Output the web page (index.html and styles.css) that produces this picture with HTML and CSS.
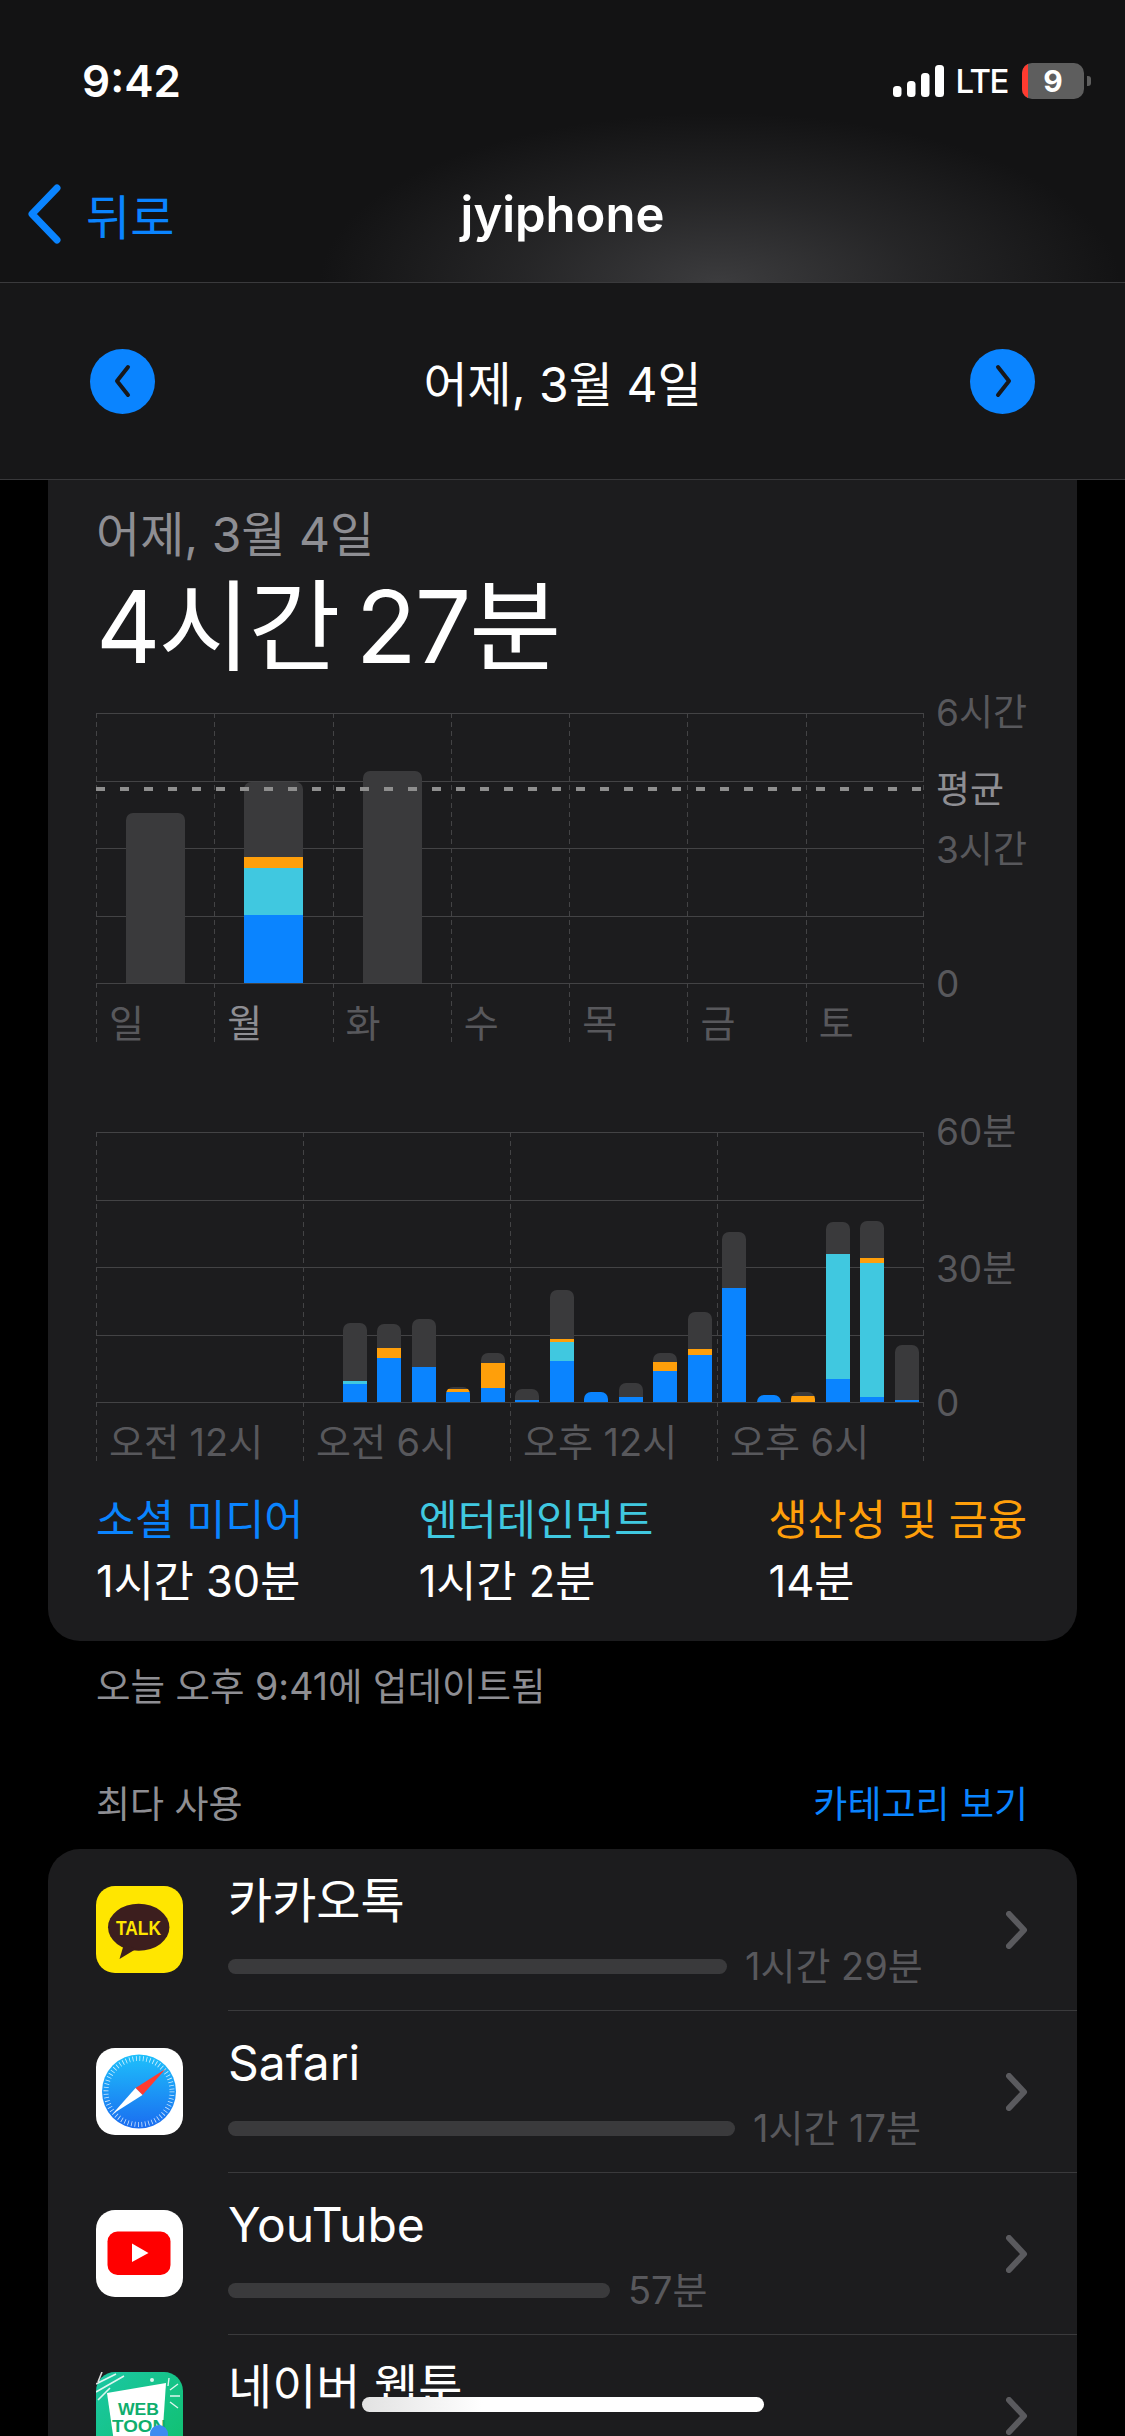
FILE: index.html
```html
<!DOCTYPE html>
<html lang="ko">
<head>
  <meta charset="UTF-8">
  <meta name="viewport" content="width=device-width, initial-scale=1.0">
  <title>jyiphone</title>
  <link rel="stylesheet" href="styles.css">
</head>
<body>
  <div class="page">
    <!-- Status bar + nav -->
    <header class="top">
      <div class="status">
        <span class="clock">9:42</span>
        <div class="status-right">
          <svg class="signal" width="52" height="32" viewBox="0 0 52 32">
            <rect x="0" y="21" width="8.5" height="11" rx="3.5" fill="#fff"/>
            <rect x="14" y="16" width="8.5" height="16" rx="3.5" fill="#fff"/>
            <rect x="28" y="8" width="8.5" height="24" rx="3.5" fill="#fff"/>
            <rect x="42" y="0" width="9" height="32" rx="3.5" fill="#fff"/>
          </svg>
          <span class="lte">LTE</span>
          <div class="battery"><span class="battery-low"></span><span class="battery-num">9</span></div>
          <span class="battery-nub"></span>
        </div>
      </div>
      <nav class="nav">
        <div class="back">
          <svg width="36" height="60" viewBox="0 0 36 60"><path d="M30 4 L5 30 L30 56" fill="none" stroke="#0a84ff" stroke-width="7" stroke-linecap="round" stroke-linejoin="round"/></svg>
          <span>뒤로</span>
        </div>
        <div class="nav-title">jyiphone</div>
        <div></div>
      </nav>
    </header>

    <div class="date-bar">
      <div class="round-btn">
        <svg width="24" height="34" viewBox="0 0 24 34"><path d="M17 3 L6 17 L17 31" fill="none" stroke="#17171a" stroke-width="4" stroke-linecap="round" stroke-linejoin="round"/></svg>
      </div>
      <div class="date-bar-label">어제, 3월 4일</div>
      <div class="round-btn">
        <svg width="24" height="34" viewBox="0 0 24 34"><path d="M7 3 L18 17 L7 31" fill="none" stroke="#17171a" stroke-width="4" stroke-linecap="round" stroke-linejoin="round"/></svg>
      </div>
    </div>

    <!-- Usage card -->
    <section class="usage-card">
      <div class="usage-date">어제, 3월 4일</div>
      <div class="usage-total">4시간 27분</div>

      <!-- Week chart -->
      <div class="chart week-chart">
        <div class="hlines"><i></i><i></i><i></i><i></i><i></i></div>
        <div class="avg-line"></div>
        <div class="week-cols">
          <div class="col">
            <div class="col-plot"><div class="bar day-bar" style="height:170px"></div></div>
            <div class="col-label">일</div>
          </div>
          <div class="col">
            <div class="col-plot">
              <div class="bar day-bar" style="height:201px">
                <div class="seg orange" style="height:11px"></div>
                <div class="seg cyan" style="height:47px"></div>
                <div class="seg blue" style="height:68px"></div>
              </div>
            </div>
            <div class="col-label current">월</div>
          </div>
          <div class="col">
            <div class="col-plot"><div class="bar day-bar" style="height:212px"></div></div>
            <div class="col-label">화</div>
          </div>
          <div class="col"><div class="col-plot"></div><div class="col-label">수</div></div>
          <div class="col"><div class="col-plot"></div><div class="col-label">목</div></div>
          <div class="col"><div class="col-plot"></div><div class="col-label">금</div></div>
          <div class="col"><div class="col-plot"></div><div class="col-label">토</div></div>
        </div>
        <div class="y-axis">
          <span>6시간</span>
          <span>3시간</span>
          <span>0</span>
          <span class="y-avg">평균</span>
        </div>
      </div>

      <!-- Hour chart -->
      <div class="chart hour-chart">
        <div class="hlines"><i></i><i></i><i></i><i></i><i></i></div>
        <div class="hour-cols">
          <div class="col"><div class="col-plot"></div><div class="col-label">오전 12시</div></div>
          <div class="col"><div class="col-plot"></div><div class="col-label">오전 6시</div></div>
          <div class="col"><div class="col-plot"></div><div class="col-label">오후 12시</div></div>
          <div class="col"><div class="col-plot"></div><div class="col-label">오후 6시</div></div>
        </div>
        <div class="hour-bars">
          <div class="bar" style="grid-column:8;height:79px"><div class="seg cyan" style="height:3px"></div><div class="seg blue" style="height:18px"></div></div>
          <div class="bar" style="grid-column:9;height:78px"><div class="seg orange" style="height:10px"></div><div class="seg blue" style="height:44px"></div></div>
          <div class="bar" style="grid-column:10;height:83px"><div class="seg blue" style="height:35px"></div></div>
          <div class="bar" style="grid-column:11;height:15px"><div class="seg orange" style="height:3px"></div><div class="seg blue" style="height:10px"></div></div>
          <div class="bar" style="grid-column:12;height:49px"><div class="seg orange" style="height:25px"></div><div class="seg blue" style="height:14px"></div></div>
          <div class="bar" style="grid-column:13;height:13px"><div class="seg blue" style="height:2px"></div></div>
          <div class="bar" style="grid-column:14;height:112px"><div class="seg orange" style="height:3px"></div><div class="seg cyan" style="height:19px"></div><div class="seg blue" style="height:41px"></div></div>
          <div class="bar blue" style="grid-column:15;height:10px"></div>
          <div class="bar" style="grid-column:16;height:19px"><div class="seg blue" style="height:5px"></div></div>
          <div class="bar" style="grid-column:17;height:49px"><div class="seg orange" style="height:9px"></div><div class="seg blue" style="height:31px"></div></div>
          <div class="bar" style="grid-column:18;height:90px"><div class="seg orange" style="height:6px"></div><div class="seg blue" style="height:47px"></div></div>
          <div class="bar" style="grid-column:19;height:170px"><div class="seg blue" style="height:114px"></div></div>
          <div class="bar blue" style="grid-column:20;height:7px"></div>
          <div class="bar" style="grid-column:21;height:10px"><div class="seg orange" style="height:6px"></div></div>
          <div class="bar" style="grid-column:22;height:180px"><div class="seg cyan" style="height:125px"></div><div class="seg blue" style="height:23px"></div></div>
          <div class="bar" style="grid-column:23;height:181px"><div class="seg orange" style="height:5px"></div><div class="seg cyan" style="height:134px"></div><div class="seg blue" style="height:5px"></div></div>
          <div class="bar" style="grid-column:24;height:57px"><div class="seg blue" style="height:2px"></div></div>
        </div>
        <div class="y-axis">
          <span>60분</span>
          <span>30분</span>
          <span>0</span>
        </div>
      </div>

      <div class="legend">
        <div>
          <div class="legend-name text-blue">소셜 미디어</div>
          <div class="legend-value">1시간 30분</div>
        </div>
        <div>
          <div class="legend-name text-cyan">엔터테인먼트</div>
          <div class="legend-value">1시간 2분</div>
        </div>
        <div>
          <div class="legend-name text-orange">생산성 및 금융</div>
          <div class="legend-value">14분</div>
        </div>
      </div>
    </section>

    <div class="updated">오늘 오후 9:41에 업데이트됨</div>

    <div class="section-head">
      <span>최다 사용</span>
      <span class="text-blue">카테고리 보기</span>
    </div>

    <!-- App list -->
    <section class="app-list">
      <div class="app-row">
        <svg class="app-icon" viewBox="0 0 87 87">
          <rect width="87" height="87" rx="19" fill="#ffe600"/>
          <ellipse cx="42.7" cy="41.3" rx="30.7" ry="23.5" fill="#3c1e1e"/>
          <path d="M28 58 L23.5 73 L40 63 Z" fill="#3c1e1e"/>
          <text x="20" y="49" class="talk-text" textLength="45" lengthAdjust="spacingAndGlyphs">TALK</text>
        </svg>
        <div class="app-body">
          <div class="app-main">
            <div class="app-name">카카오톡</div>
            <div class="app-usage"><div class="usage-bar" style="width:499px"></div><span>1시간 29분</span></div>
          </div>
          <svg class="chevron" width="22" height="38" viewBox="0 0 22 38"><path d="M3 3 L18 19 L3 35" fill="none" stroke="#5a5a5e" stroke-width="6" stroke-linecap="round" stroke-linejoin="round"/></svg>
        </div>
      </div>

      <div class="app-row">
        <svg class="app-icon" viewBox="0 0 87 87">
          <defs>
            <linearGradient id="safari-blue" x1="0" y1="0" x2="0" y2="1">
              <stop offset="0" stop-color="#1ec0fb"/>
              <stop offset="1" stop-color="#1a6cf0"/>
            </linearGradient>
          </defs>
          <rect width="87" height="87" rx="19" fill="#fff"/>
          <circle cx="43" cy="43.5" r="37" fill="url(#safari-blue)"/>
          <circle cx="43" cy="43.5" r="33" fill="none" stroke="#fff" stroke-opacity=".8" stroke-width="5" stroke-dasharray="0.8 2.66"/>
          <path d="M69.5 21 L39.5 40 L46.5 47 Z" fill="#ff3b30"/>
          <path d="M16.5 66 L39.5 40 L46.5 47 Z" fill="#fff"/>
        </svg>
        <div class="app-body">
          <div class="app-main">
            <div class="app-name">Safari</div>
            <div class="app-usage"><div class="usage-bar" style="width:507px"></div><span>1시간 17분</span></div>
          </div>
          <svg class="chevron" width="22" height="38" viewBox="0 0 22 38"><path d="M3 3 L18 19 L3 35" fill="none" stroke="#5a5a5e" stroke-width="6" stroke-linecap="round" stroke-linejoin="round"/></svg>
        </div>
      </div>

      <div class="app-row">
        <svg class="app-icon" viewBox="0 0 87 87">
          <rect width="87" height="87" rx="19" fill="#fff"/>
          <rect x="11.5" y="21.5" width="63" height="43.5" rx="10" fill="#ff0000"/>
          <path d="M36 33.5 L52.5 43 L36 52 Z" fill="#fff"/>
        </svg>
        <div class="app-body">
          <div class="app-main">
            <div class="app-name">YouTube</div>
            <div class="app-usage"><div class="usage-bar" style="width:382px"></div><span>57분</span></div>
          </div>
          <svg class="chevron" width="22" height="38" viewBox="0 0 22 38"><path d="M3 3 L18 19 L3 35" fill="none" stroke="#5a5a5e" stroke-width="6" stroke-linecap="round" stroke-linejoin="round"/></svg>
        </div>
      </div>

      <div class="app-row">
        <svg class="app-icon" viewBox="0 0 87 87">
          <defs>
            <linearGradient id="toon-green" x1="0" y1="0" x2="1" y2="1">
              <stop offset="0" stop-color="#1bc7a4"/>
              <stop offset="1" stop-color="#10c06c"/>
            </linearGradient>
          </defs>
          <rect width="87" height="87" rx="19" fill="url(#toon-green)"/>
          <path d="M0 12 L20 2 M0 20 L28 4 M2 28 L14 16 M6 0 L2 10" stroke="#fff" stroke-width="1.6" opacity=".85"/>
          <path d="M74 18 L82 12 M74 24 L84 24 M74 30 L82 36 M72 14 L73 6" stroke="#fff" stroke-width="1.4" opacity=".85"/>
          <circle cx="56" cy="8" r="2" fill="#fff" opacity=".85"/>
          <path d="M11 21 L70 11 L66 70 L18 70 Z" fill="#fff"/>
          <text x="22" y="43" class="toon-text" textLength="41" lengthAdjust="spacingAndGlyphs">WEB</text>
          <text x="16" y="60" class="toon-text" textLength="54" lengthAdjust="spacingAndGlyphs">TOON</text>
          <circle cx="63" cy="62" r="9" fill="#3d8bf0"/>
        </svg>
        <div class="app-body">
          <div class="app-main">
            <div class="app-name">네이버 웹툰</div>
          </div>
          <svg class="chevron" width="22" height="38" viewBox="0 0 22 38"><path d="M3 3 L18 19 L3 35" fill="none" stroke="#5a5a5e" stroke-width="6" stroke-linecap="round" stroke-linejoin="round"/></svg>
        </div>
      </div>
    </section>

    <div class="home-indicator"></div>
  </div>
</body>
</html>
```

FILE: styles.css
```css
:root {
  --card-bg: #1c1c1e;
  --grid: #434345;
  --bar-gray: #3a3a3c;
  --blue: #0a84ff;
  --cyan: #40c8e0;
  --orange: #ff9f0a;
  --muted: #8e8e93;
  --faint: #58585c;
}

* {
  box-sizing: border-box;
}

html, body {
  margin: 0;
  background: #000;
}

body {
  font-family: Inter, "Noto Sans CJK KR", sans-serif;
  color: #fff;
}

.page {
  position: relative;
  width: 1125px;
  height: 2436px;
  overflow: hidden;
}

/* Header */
.top {
  height: 283px;
  padding-top: 26px;
  border-bottom: 1px solid #3a3a3c;
  background:
    radial-gradient(ellipse 400px 170px at 720px 283px, #3c3c3e 0%, rgba(60, 60, 62, 0.45) 50%, rgba(60, 60, 62, 0) 100%),
    #131314;
}

.status {
  height: 110px;
  display: flex;
  align-items: center;
  justify-content: space-between;
  padding: 0 34px 0 82px;
}

.clock {
  font-size: 44px;
  font-weight: 600;
}

.status-right {
  display: flex;
  align-items: center;
}

.signal {
  margin-right: 11px;
}

.lte {
  font-size: 33px;
  font-weight: 500;
  letter-spacing: -1.5px;
  margin-right: 14px;
}

.battery {
  position: relative;
  width: 62px;
  height: 36px;
  border-radius: 10px;
  background: #5e5e5e;
  overflow: hidden;
  display: flex;
  align-items: center;
  justify-content: center;
}

.battery-low {
  position: absolute;
  left: 0;
  top: 0;
  bottom: 0;
  width: 6px;
  background: #ff3b30;
}

.battery-num {
  font-size: 30px;
  font-weight: 700;
}

.battery-nub {
  width: 4px;
  height: 10px;
  margin-left: 3px;
  border-radius: 0 3px 3px 0;
  background: #5e5e5e;
}

.nav {
  height: 110px;
  margin-top: 23px;
  display: grid;
  grid-template-columns: 1fr auto 1fr;
  align-items: center;
}

.back {
  display: flex;
  align-items: center;
  gap: 23px;
  padding-left: 27px;
  color: var(--blue);
  font-size: 48px;
}

.nav-title {
  font-size: 49px;
  font-weight: 600;
}

.date-bar {
  height: 197px;
  display: flex;
  align-items: center;
  justify-content: space-between;
  padding: 0 90px;
  border-bottom: 1px solid #38383a;
  background: #171718;
}

.round-btn {
  width: 65px;
  height: 65px;
  border-radius: 50%;
  background: var(--blue);
  display: flex;
  align-items: center;
  justify-content: center;
}

.date-bar-label {
  font-size: 48px;
}

/* Usage card */
.usage-card {
  margin: 0 48px;
  padding: 30px 50px 35px 48px;
  background: var(--card-bg);
  border-radius: 0 0 32px 32px;
}

.usage-date {
  font-size: 48px;
  line-height: 50px;
  color: var(--muted);
}

.usage-total {
  margin-top: 12px;
  font-size: 100px;
  line-height: 110px;
  letter-spacing: -2px;
  word-spacing: -9px;
}

.chart {
  position: relative;
  width: 828px;
}

.week-chart {
  margin-top: 31px;
}

.hour-chart {
  margin-top: 89px;
}

.hlines {
  position: absolute;
  left: 0;
  right: 0;
  top: 0;
  height: 271px;
  display: flex;
  flex-direction: column;
  justify-content: space-between;
}

.hlines i {
  display: block;
  height: 1px;
  background: var(--grid);
}

.avg-line {
  position: absolute;
  z-index: 2;
  left: 0;
  right: 0;
  top: 74px;
  height: 4px;
  background: repeating-linear-gradient(90deg, #8e8e8e 0, #8e8e8e 9px, transparent 9px, transparent 24px);
}

.week-cols, .hour-cols {
  position: relative;
  display: grid;
  background: repeating-linear-gradient(180deg, var(--grid) 0, var(--grid) 5px, transparent 5px, transparent 9px) right / 1px 100% no-repeat;
}

.week-cols {
  grid-template-columns: repeat(7, 1fr);
}

.hour-cols {
  grid-template-columns: repeat(4, 1fr);
}

.col {
  height: 330px;
  background: repeating-linear-gradient(180deg, var(--grid) 0, var(--grid) 5px, transparent 5px, transparent 9px) left / 1px 100% no-repeat;
}

.col-plot {
  height: 270px;
  display: flex;
  align-items: flex-end;
  padding-left: 30px;
}

.col-label {
  height: 60px;
  padding: 19px 0 0 13px;
  font-size: 38px;
  line-height: 42px;
  color: var(--faint);
  white-space: nowrap;
}

.col-label.current {
  color: var(--muted);
}

.bar {
  display: flex;
  flex-direction: column;
  justify-content: flex-end;
  border-radius: 7px 7px 0 0;
  background: var(--bar-gray);
  overflow: hidden;
}

.day-bar {
  width: 59px;
}

.seg {
  flex: none;
}

.blue {
  background: var(--blue);
}

.cyan {
  background: var(--cyan);
}

.orange {
  background: var(--orange);
}

.hour-bars {
  position: absolute;
  left: 0;
  right: 0;
  top: 0;
  height: 270px;
  display: grid;
  grid-template-columns: repeat(24, 1fr);
  align-items: end;
}

.hour-bars .bar {
  grid-row: 1;
  width: 24px;
  margin-left: 5px;
}

.y-axis {
  position: absolute;
  left: 840px;
  top: -3px;
  height: 273px;
  display: flex;
  flex-direction: column;
  justify-content: space-between;
  font-size: 37px;
  color: var(--faint);
}

.y-axis span {
  height: 0;
  display: flex;
  align-items: center;
  white-space: nowrap;
}

.y-axis .y-avg {
  position: absolute;
  top: 77px;
  color: var(--muted);
}

.legend {
  margin-top: 33px;
  display: flex;
  justify-content: space-between;
}

.legend-name {
  font-size: 42.5px;
  line-height: 50px;
}

.legend-value {
  margin-top: 11px;
  font-size: 43.5px;
  line-height: 50px;
}

.text-blue {
  color: var(--blue);
}

.text-cyan {
  color: var(--cyan);
}

.text-orange {
  color: var(--orange);
}

.updated {
  margin: 23px 0 0 96px;
  font-size: 37.5px;
  line-height: 46px;
  color: var(--muted);
}

.section-head {
  margin: 72px 97px 0 96px;
  display: flex;
  justify-content: space-between;
  font-size: 37px;
  line-height: 46px;
  color: var(--muted);
}

/* App list */
.app-list {
  margin: 21px 48px 0;
  background: var(--card-bg);
  border-radius: 32px 32px 0 0;
}

.app-row {
  height: 162px;
  display: flex;
  align-items: center;
  padding-left: 48px;
}

.app-icon {
  flex: none;
  width: 87px;
  height: 87px;
  margin: -2px 45px 0 0;
}

.app-body {
  flex: 1;
  align-self: stretch;
  display: flex;
  align-items: center;
  justify-content: space-between;
  padding-right: 49px;
  border-bottom: 1px solid #3a3a3c;
}

.app-main {
  align-self: flex-start;
  padding-top: 22px;
}

.app-name {
  font-size: 48px;
  line-height: 60px;
}

.app-usage {
  margin-top: 12px;
  display: flex;
  align-items: center;
  gap: 18px;
  font-size: 38px;
  line-height: 46px;
  color: var(--faint);
}

.usage-bar {
  height: 15px;
  border-radius: 8px;
  background: var(--bar-gray);
}

.talk-text {
  font-family: "Liberation Sans", sans-serif;
  font-size: 21px;
  font-weight: 700;
  fill: #ffe600;
}

.toon-text {
  font-family: "Liberation Sans", sans-serif;
  font-size: 17px;
  font-weight: 700;
  fill: #0fae6e;
}

.home-indicator {
  position: absolute;
  left: 362px;
  top: 2397px;
  width: 402px;
  height: 15px;
  border-radius: 8px;
  background: linear-gradient(90deg, #e2e2e2 0, #fff 30%);
}
```
